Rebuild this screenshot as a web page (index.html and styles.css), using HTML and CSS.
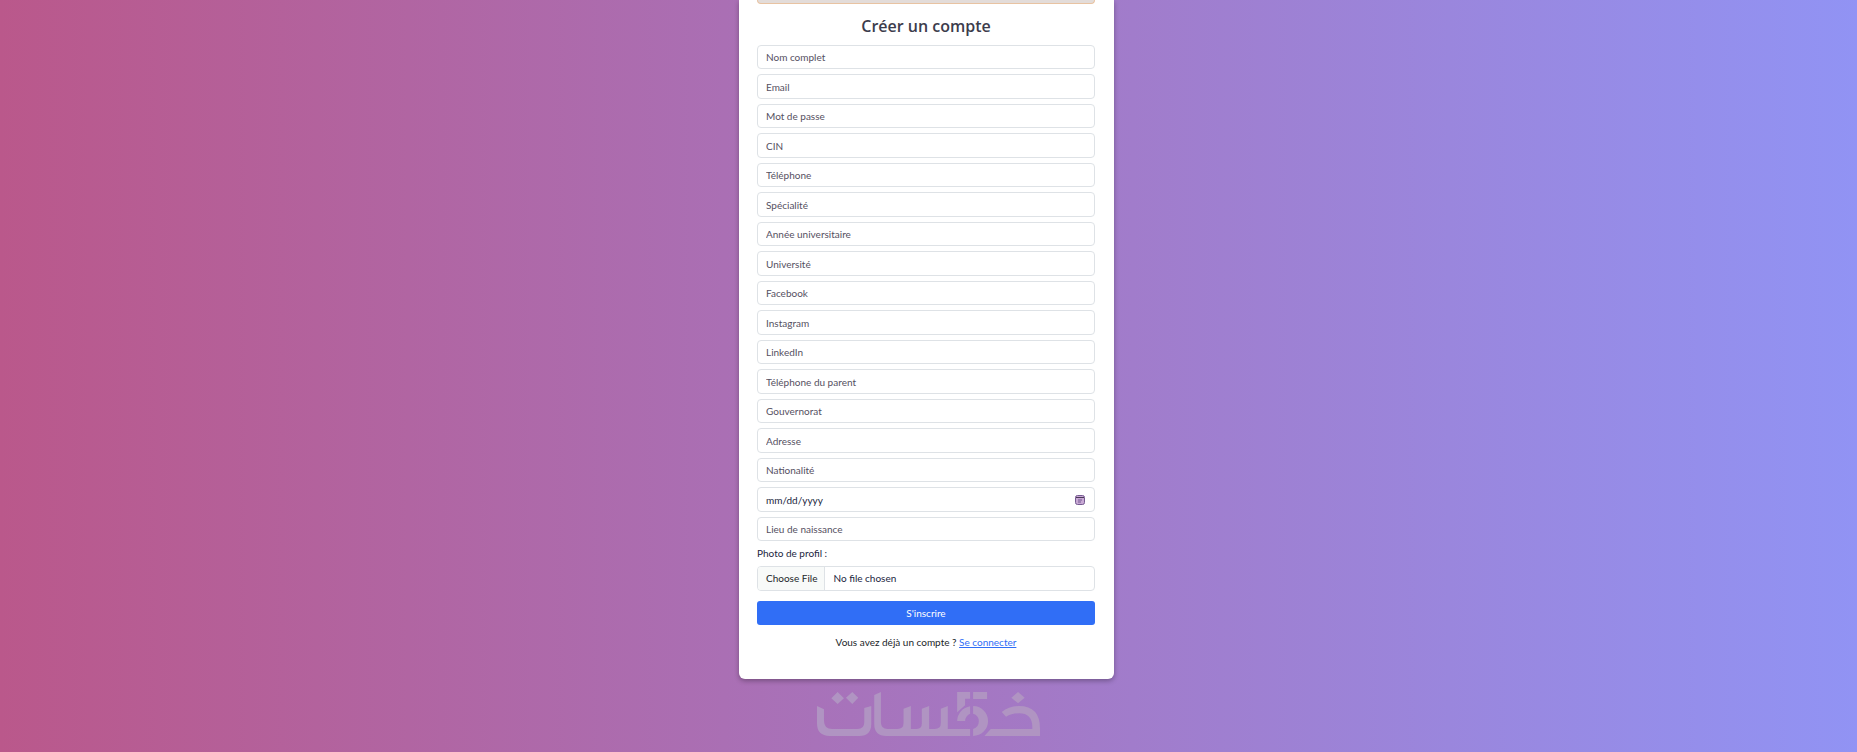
FILE: index.html
```
<!DOCTYPE html>
<html lang="fr">
  <head>
    <meta charset="UTF-8" />
    <meta name="viewport" content="width=device-width, initial-scale=1.0" />
    <title>Créer un compte</title>
    <link rel="stylesheet" href="styles.css">
  </head>
  <body>
    <main class="register-card">
      <div class="alert"></div>
      <h1>Créer un compte</h1>

      <form>
        <div class="fields">
          <input class="form-control" type="text" name="nom" placeholder="Nom complet" aria-label="Nom complet" />
          <input class="form-control" type="email" name="email" placeholder="Email" aria-label="Email" />
          <input class="form-control" type="password" name="password" placeholder="Mot de passe" aria-label="Mot de passe" />
          <input class="form-control" type="text" name="cin" placeholder="CIN" aria-label="CIN" />
          <input class="form-control" type="tel" name="telephone" placeholder="Téléphone" aria-label="Téléphone" />
          <input class="form-control" type="text" name="specialite" placeholder="Spécialité" aria-label="Spécialité" />
          <input class="form-control" type="text" name="annee" placeholder="Année universitaire" aria-label="Année universitaire" />
          <input class="form-control" type="text" name="universite" placeholder="Université" aria-label="Université" />
          <input class="form-control" type="text" name="facebook" placeholder="Facebook" aria-label="Facebook" />
          <input class="form-control" type="text" name="instagram" placeholder="Instagram" aria-label="Instagram" />
          <input class="form-control" type="text" name="linkedin" placeholder="LinkedIn" aria-label="LinkedIn" />
          <input class="form-control" type="tel" name="telephone_parent" placeholder="Téléphone du parent" aria-label="Téléphone du parent" />
          <input class="form-control" type="text" name="gouvernorat" placeholder="Gouvernorat" aria-label="Gouvernorat" />
          <input class="form-control" type="text" name="adresse" placeholder="Adresse" aria-label="Adresse" />
          <input class="form-control" type="text" name="nationalite" placeholder="Nationalité" aria-label="Nationalité" />
          <input class="form-control" type="date" name="date_naissance" aria-label="Date de naissance" />
          <input class="form-control" type="text" name="lieu_naissance" placeholder="Lieu de naissance" aria-label="Lieu de naissance" />
        </div>

        <label for="photo">Photo de profil :</label>
        <input class="form-control file" type="file" id="photo" name="photo" />

        <button type="submit" class="btn">S'inscrire</button>
      </form>

      <p class="login">Vous avez déjà un compte ? <a href="#">Se connecter</a></p>
    </main>

    <svg class="logo" viewBox="0 0 670 132" role="img" aria-label="خمسات">
      <path d="M62 0L81 19L62 36L43 19ZM106 0L124 17L106 36L87 17Z" />
      <path d="M0 42L21 52V86Q21 111 46 111H122Q142 111 142 91V48L163 42V96Q163 132 127 132H38Q0 132 0 94Z" />
      <path d="M172 9L192 0V91Q192 111 212 111H242Q260 111 260 93V50L282 42V111H300Q315 111 315 94V50L337 42V111H354Q372 111 372 93V50L393 42V111H460V132H208Q172 132 172 96Z" />
      <path d="M421 0H460V20H445V40L421 61ZM469 0H511V21H469Z" />
      <path d="M421 87A46 46 0 0 1 460 43V65A25 25 0 0 0 445 87ZM469 42A45 45 0 0 1 469 132V111A24 24 0 0 0 469 65Z" />
      <path d="M604 0L624 17L604 34L584 17Z" />
      <path d="M503 132L522 111H647V106Q647 64 607 64Q584 64 568 74L555 60Q576 42 607 42Q670 42 670 110V132Z" />
    </svg>
  </body>
</html>
```
FILE: styles.css
```
* {
  box-sizing: border-box;
}

body {
  margin: 0;
  padding-right: 4px;
  min-height: 100vh;
  overflow: hidden;
  display: flex;
  flex-direction: column;
  align-items: center;
  font-family: "Segoe UI", Lato, sans-serif;
  font-size: 10px;
  line-height: 16px;
  color: #212529;
  background: linear-gradient(to right, #ba588b, #9193f4);
}

.register-card {
  width: 100%;
  max-width: 375px;
  padding: 0 19px 29px 18px;
  background: #fff;
  border-radius: 0 0 6px 6px;
  box-shadow: 0 2px 5px rgba(0, 0, 0, 0.3);
}

.alert {
  height: 4px;
  background: #e3dcd9;
  border: 1px solid #e8c3a2;
  border-top: 0;
  border-radius: 0 0 4px 4px;
}

h1 {
  margin: 10px 0 7px;
  font-family: "Segoe UI", "Open Sans", sans-serif;
  font-size: 16px;
  line-height: 24px;
  font-weight: 600;
  text-align: center;
  color: #3c3c4c;
}

.fields {
  display: flex;
  flex-direction: column;
  gap: 5px;
}

.form-control {
  display: block;
  width: 100%;
  height: 24px;
  padding: 0 8px;
  font-family: inherit;
  font-size: 10px;
  color: #212540;
  background: #fff;
  border: 1px solid #dee2e6;
  border-radius: 4px;
}

.form-control:nth-child(even) {
  height: 25px;
}

.form-control::placeholder {
  color: #55505f;
  opacity: 1;
}

.form-control::-webkit-datetime-edit,
.form-control::-webkit-datetime-edit-fields-wrapper,
.form-control::-webkit-datetime-edit-month-field,
.form-control::-webkit-datetime-edit-day-field,
.form-control::-webkit-datetime-edit-year-field {
  padding: 0;
}

.form-control::-webkit-calendar-picker-indicator {
  width: 10px;
  height: 10px;
  margin-right: 1px;
  padding: 0;
  background: url("data:image/svg+xml,%3Csvg xmlns='http://www.w3.org/2000/svg' viewBox='0 0 10 10'%3E%3Crect x='.5' y='.5' width='9' height='9' rx='2' fill='%23c8a8d4' stroke='%23755a91'/%3E%3Cpath d='M1 2.5h8' stroke='%23493958'/%3E%3Cpath d='M3 5h4M3 7h3' stroke='%23755a91'/%3E%3C/svg%3E") no-repeat center;
}

label {
  display: block;
  margin: 4px 0 5px;
  color: #212540;
}

.form-control.file {
  height: 25px;
  line-height: 23px;
}

.file::file-selector-button {
  height: 23px;
  margin: 0 8px 0 -8px;
  padding: 0 7px 0 8px;
  font: inherit;
  color: #212529;
  background: #f8faf9;
  border: 0;
  border-right: 1px solid #dee2e6;
}

.btn {
  display: block;
  width: 100%;
  height: 24px;
  margin-top: 10px;
  font-family: inherit;
  font-size: 10px;
  color: #fff;
  background: #306ef6;
  border: 0;
  border-radius: 3px;
}

.login {
  margin: 9px 0 0;
  text-align: center;
}

.login a {
  color: #306ef6;
}

/* logo sous la carte */
.logo {
  width: 223px;
  height: 44px;
  margin: 13px 0 0 4px;
  fill: #b094c2;
}
```
